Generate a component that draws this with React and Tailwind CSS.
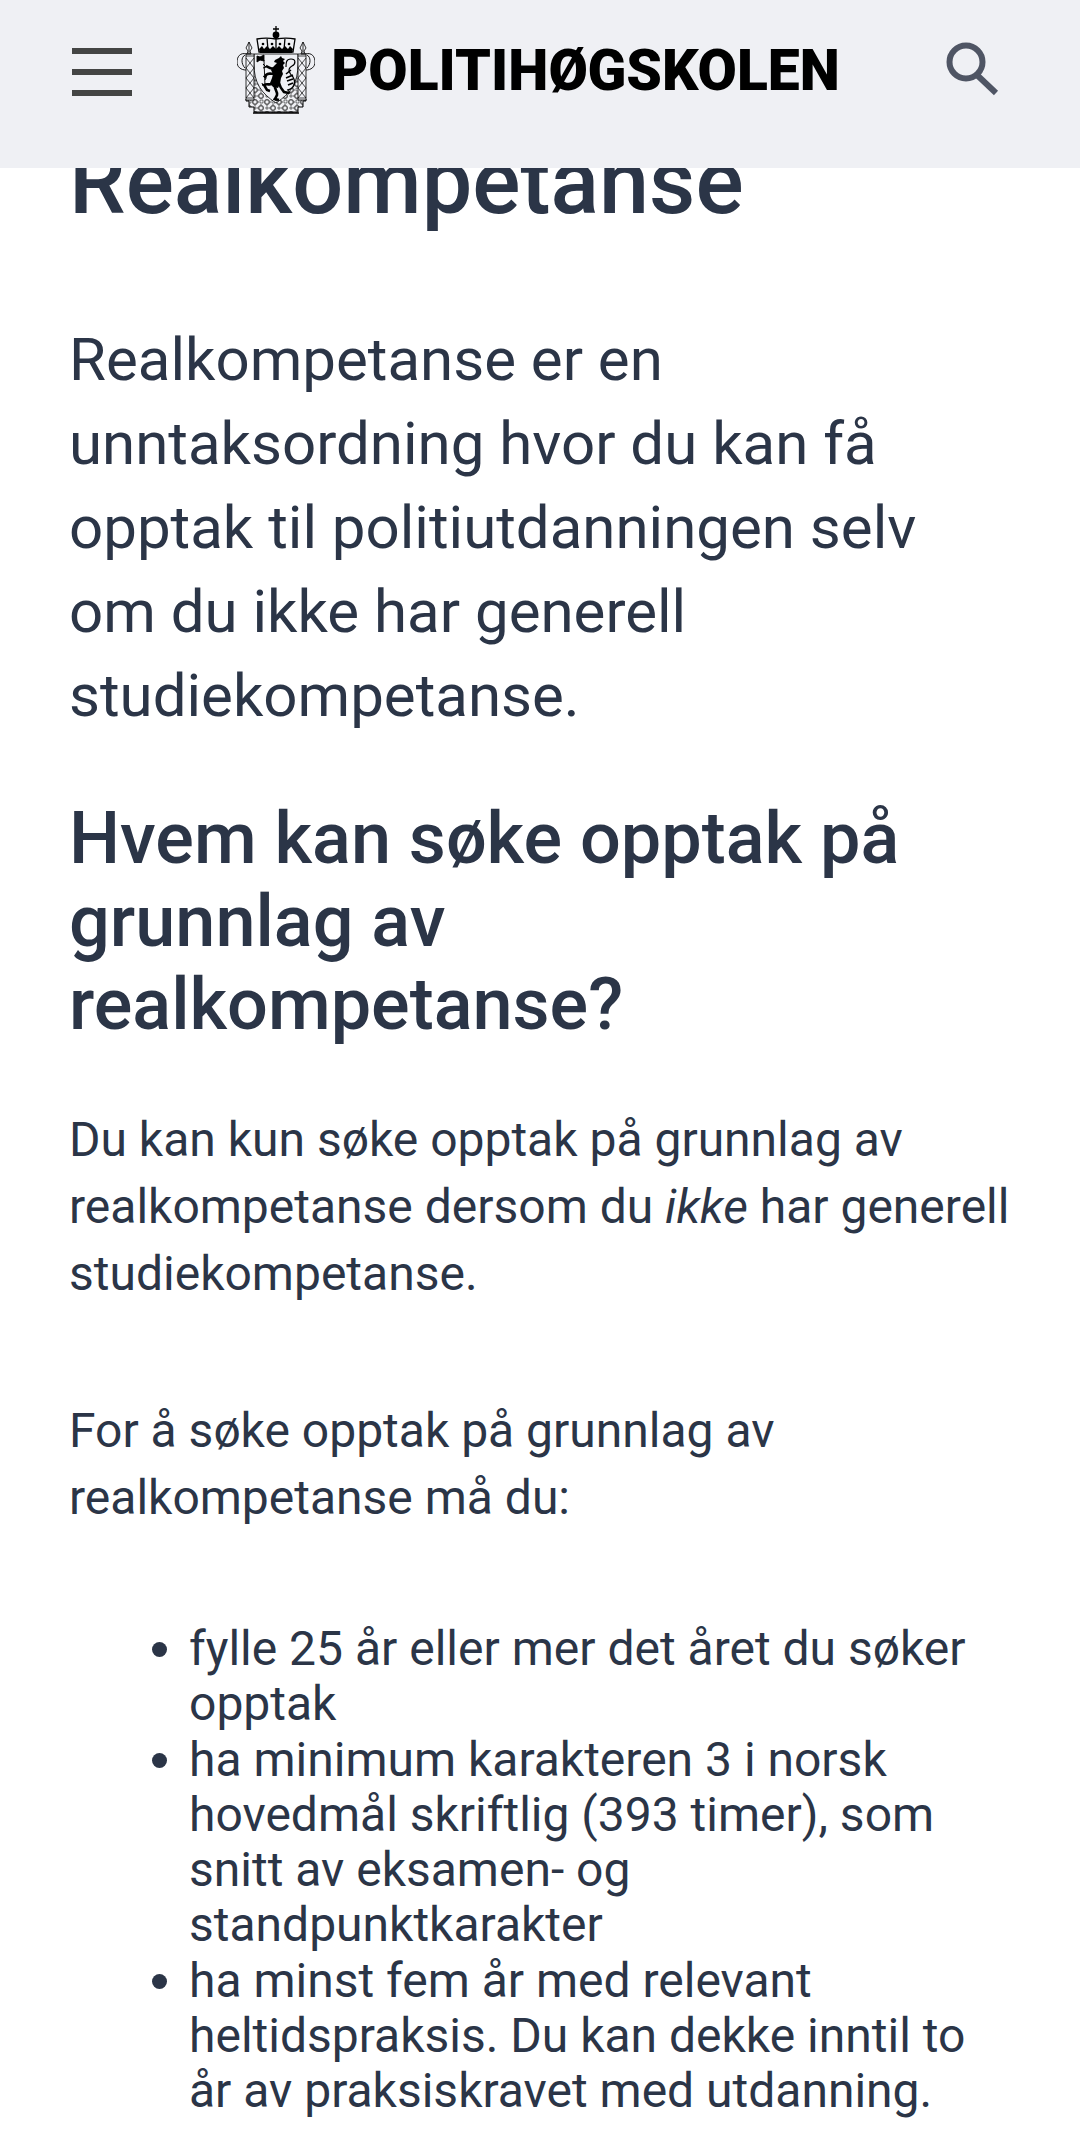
import { useState } from 'react'

const requirements = [
  'fylle 25 år eller mer det året du søker opptak',
  'ha minimum karakteren 3 i norsk hovedmål skriftlig (393 timer), som snitt av eksamen- og standpunktkarakter',
  'ha minst fem år med relevant heltidspraksis. Du kan dekke inntil to år av praksiskravet med utdanning.',
]

// Norwegian coat of arms
function Crest() {
  return (
    <svg className="h-[88px] w-[78px] shrink-0" viewBox="0 0 78 88" fill="none" stroke="#000" aria-hidden="true">
      <defs>
        <pattern id="crosses" width="12" height="12" patternUnits="userSpaceOnUse" x="3" y="1">
          <path d="M2 0h2v2h2v2h-2v2h-2v-2h-2v-2h2zM8 6h2v2h2v2h-2v2h-2v-2h-2v-2h2z" strokeWidth="0.7" />
          <path d="M8 1h3v3h-3zM2 8h2v2h-2z" strokeWidth="0.5" />
        </pattern>
      </defs>
      {/* Mantle */}
      <path d="M9 50v25h3v6h5v6h44v-6h5v-6h3V50z" fill="url(#crosses)" stroke="none" />
      <path d="M9 73v2h3v6h5v5h44v-5h5v-6h3v-2" strokeWidth="1" />
      <path d="M16 87h46" strokeWidth="1.500" />
      {/* Shield */}
      <path d="M17 28h44v10c0 19-7 29-22 39C24 67 17 57 17 38z" fill="#eff0f4" strokeWidth="0.800" />
      {/* Side columns */}
      <path d="M9 28h8v46h-8zM61 28h8v46h-8z" fill="#eff0f4" strokeWidth="0.800" />
      <path d="M9 32l8 10-8 10 8 10-8 10M17 32l-8 10 8 10-8 10 8 10M61 32l8 10-8 10 8 10-8 10M69 32l-8 10 8 10-8 10 8 10M9 30h8M61 30h8M9 72h8M61 72h8" strokeWidth="0.700" />
      <path d="M10 28c-7-2-10 3-10 8s4 8 9 8M8 29c-4 2-4 9 0 13M68 28c7-2 10 3 10 8s-4 8-9 8M70 29c4 2 4 9 0 13" strokeWidth="0.900" />
      <path d="M12 16l-3 6 2 3-1 3h4l-1-3 2-3zM66 16l-3 6 2 3-1 3h4l-1-3 2-3zM12 16v12M66 16v12" strokeWidth="0.800" />
      {/* Crown */}
      <path d="M39 0v7M36 3h6" strokeWidth="1.300" />
      <circle cx="39" cy="9" r="3.400" fill="#000" stroke="none" />
      <path d="M20 13c5-1 13-1 19 0 6-1 14-1 19 0l-2 13H22zM30 12l1 12M48 12l-1 12M39 11v13" strokeWidth="1.300" />
      <path d="M22 23l3-3 2 3 3-3 3 3 3-3 3 3 3-3 3 3 3-3 3 3 2-3 3 3-1 4H23z" fill="#000" stroke="none" />
      <circle cx="26" cy="18" r="1.300" fill="#000" stroke="none" />
      <circle cx="35" cy="18" r="1.300" fill="#000" stroke="none" />
      <circle cx="43" cy="18" r="1.300" fill="#000" stroke="none" />
      <circle cx="52" cy="18" r="1.300" fill="#000" stroke="none" />
      {/* Lion */}
      <path d="M38 34l4-2 2-2 1 2 3 1-2 2 2 2-2 2 1 3-2 3 1 3-2 4-1 6-2 4-5-1-3-4 2-5 1-4-2-4 3-4 3-3-3-1z" fill="#000" stroke="none" />
      <path d="M39 41c-4 3-6 1-10-1M38 47c-4 2-6-1-9 2l-1 3M37 57c-4 3-7 0-10 2l3 5 3 1M42 57c1 4 3 7 5 9l5 1M38 59c-1 5 3 6 2 10l-2 4 4 1" strokeWidth="2.600" />
      <path d="M26 38l3 3-3 1M26 50l3 2-1 2M25 57l1 3M51 64l2 3-2 1M36 73l4 2" strokeWidth="1" />
      <path d="M50 64c8-1 9-8 6-13-4-4-6-8-1-11 4-2 4-7-1-7s-5 4-5 8" strokeWidth="1.200" />
      <path d="M54 44l-5 4M56 49l-7 3M56 53l-6 2M56 57l-5 2" strokeWidth="1.600" />
      <path d="M20 30l3 1 4-2v6l-4-1-3 2zM27 34l1 26" fill="#000" strokeWidth="0.900" />
    </svg>
  )
}

export default function App() {
  const [menuOpen, setMenuOpen] = useState(false)

  return (
    <div className="min-h-screen bg-white text-[#2b3547] font-['Roboto',sans-serif]">
      <header className="sticky top-0 z-10 flex h-[168px] items-start justify-between bg-[#eff0f4] pl-[72px] pr-[81px]">
        <button
          type="button"
          aria-label="Meny"
          aria-expanded={menuOpen}
          onClick={() => setMenuOpen(!menuOpen)}
          className="mt-12 flex w-[60px] flex-col gap-[15px]"
        >
          <span className="h-1.5 bg-[#444544]" />
          <span className="h-1.5 bg-[#444544]" />
          <span className="h-1.5 bg-[#444544]" />
        </button>

        <a href="/" className="mt-[26px] flex items-center gap-4">
          <Crest />
          <span className="text-[57px] font-black leading-none text-black">POLITIHØGSKOLEN</span>
        </a>

        <button type="button" aria-label="Søk" className="mt-[42px]">
          <svg className="h-[54px] w-[54px]" viewBox="0 0 54 54" fill="none" stroke="#4f5564">
            <circle cx="21" cy="20" r="16.500" strokeWidth="6" />
            <path d="M32 33l19 18" strokeWidth="6" />
          </svg>
        </button>
      </header>

      <main className="-mt-[38px] pl-[69px] pr-[68px]">
        <h1 className="text-[90px] font-medium leading-[106px]">Realkompetanse</h1>

        <p className="mt-[82px] text-[60px] leading-[84px]">
          Realkompetanse er en unntaksordning hvor du kan få opptak til politiutdanningen selv om du ikke har generell
          studiekompetanse.
        </p>

        <h2 className="mt-[59px] text-[72px] font-medium leading-[83px]">
          Hvem kan søke opptak på grunnlag av realkompetanse?
        </h2>

        <p className="mt-[60px] text-[48px] leading-[67px]">
          Du kan kun søke opptak på grunnlag av realkompetanse dersom du <em>ikke</em> har generell studiekompetanse.
        </p>

        <p className="mt-[90px] text-[48px] leading-[67px]">
          For å søke opptak på grunnlag av realkompetanse må du:
        </p>

        <ul className="mt-[90px] flex list-disc flex-col gap-px pl-[120px] pr-10 text-[48px] leading-[55px]">
          {requirements.map((item) => (
            <li key={item}>{item}</li>
          ))}
        </ul>
      </main>
    </div>
  )
}
